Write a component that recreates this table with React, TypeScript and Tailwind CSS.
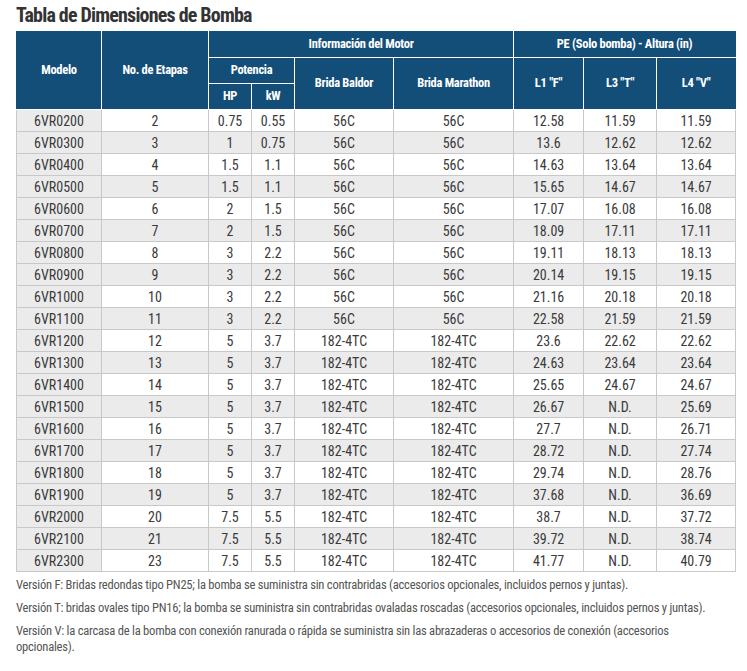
const rows: string[][] = [
  ['6VR0200', '2', '0.75', '0.55', '56C', '56C', '12.58', '11.59', '11.59'],
  ['6VR0300', '3', '1', '0.75', '56C', '56C', '13.6', '12.62', '12.62'],
  ['6VR0400', '4', '1.5', '1.1', '56C', '56C', '14.63', '13.64', '13.64'],
  ['6VR0500', '5', '1.5', '1.1', '56C', '56C', '15.65', '14.67', '14.67'],
  ['6VR0600', '6', '2', '1.5', '56C', '56C', '17.07', '16.08', '16.08'],
  ['6VR0700', '7', '2', '1.5', '56C', '56C', '18.09', '17.11', '17.11'],
  ['6VR0800', '8', '3', '2.2', '56C', '56C', '19.11', '18.13', '18.13'],
  ['6VR0900', '9', '3', '2.2', '56C', '56C', '20.14', '19.15', '19.15'],
  ['6VR1000', '10', '3', '2.2', '56C', '56C', '21.16', '20.18', '20.18'],
  ['6VR1100', '11', '3', '2.2', '56C', '56C', '22.58', '21.59', '21.59'],
  ['6VR1200', '12', '5', '3.7', '182-4TC', '182-4TC', '23.6', '22.62', '22.62'],
  ['6VR1300', '13', '5', '3.7', '182-4TC', '182-4TC', '24.63', '23.64', '23.64'],
  ['6VR1400', '14', '5', '3.7', '182-4TC', '182-4TC', '25.65', '24.67', '24.67'],
  ['6VR1500', '15', '5', '3.7', '182-4TC', '182-4TC', '26.67', 'N.D.', '25.69'],
  ['6VR1600', '16', '5', '3.7', '182-4TC', '182-4TC', '27.7', 'N.D.', '26.71'],
  ['6VR1700', '17', '5', '3.7', '182-4TC', '182-4TC', '28.72', 'N.D.', '27.74'],
  ['6VR1800', '18', '5', '3.7', '182-4TC', '182-4TC', '29.74', 'N.D.', '28.76'],
  ['6VR1900', '19', '5', '3.7', '182-4TC', '182-4TC', '37.68', 'N.D.', '36.69'],
  ['6VR2000', '20', '7.5', '5.5', '182-4TC', '182-4TC', '38.7', 'N.D.', '37.72'],
  ['6VR2100', '21', '7.5', '5.5', '182-4TC', '182-4TC', '39.72', 'N.D.', '38.74'],
  ['6VR2300', '23', '7.5', '5.5', '182-4TC', '182-4TC', '41.77', 'N.D.', '40.79'],
]

// column widths in px, left to right
const widths = [85, 107, 43, 43, 99, 120, 70, 73, 79]

const notes = [
  'Versión F: Bridas redondas tipo PN25; la bomba se suministra sin contrabridas (accesorios opcionales, incluidos pernos y juntas).',
  'Versión T: bridas ovales tipo PN16; la bomba se suministra sin contrabridas ovaladas roscadas (accesorios opcionales, incluidos pernos y juntas).',
  'Versión V: la carcasa de la bomba con conexión ranurada o rápida se suministra sin las abrazaderas o accesorios de conexión (accesorios opcionales).',
]

const th = 'border border-white font-bold text-white text-[12.5px] tracking-[-0.3px] text-center align-middle p-0'

export default function App() {
  return (
    <div className="bg-white w-[747px] h-[671px] px-4 pt-[2px] text-[#333] font-['Roboto_Condensed','Liberation_Sans',sans-serif]">
      <h1 className="text-[20px] leading-[26px] font-bold text-[#333] tracking-[-0.8px]">
        Tabla de Dimensiones de Bomba
      </h1>

      <table className="border-collapse table-fixed w-[719px] mt-[3px]">
        <colgroup>
          {widths.map((w, i) => (
            <col key={i} style={{ width: w }} />
          ))}
        </colgroup>
        <thead className="bg-[#134e79]">
          <tr className="h-[26px]">
            <th rowSpan={3} className={th + ' border-l-[#134e79] border-t-[#134e79]'}>Modelo</th>
            <th rowSpan={3} className={th + ' border-t-[#134e79]'}>No. de Etapas</th>
            <th colSpan={4} className={th + ' border-t-[#134e79]'}>Información del Motor</th>
            <th colSpan={3} className={th + ' border-t-[#134e79] border-r-[#134e79]'}>PE (Solo bomba) - Altura (in)</th>
          </tr>
          <tr className="h-[26px]">
            <th colSpan={2} className={th}>Potencia</th>
            <th rowSpan={2} className={th}>Brida Baldor</th>
            <th rowSpan={2} className={th}>Brida Marathon</th>
            <th rowSpan={2} className={th}>L1 "F"</th>
            <th rowSpan={2} className={th}>L3 "T"</th>
            <th rowSpan={2} className={th + ' border-r-[#134e79]'}>L4 "V"</th>
          </tr>
          <tr className="h-[26px]">
            <th className={th}>HP</th>
            <th className={th}>kW</th>
          </tr>
        </thead>
        <tbody>
          {rows.map((r, i) => (
            <tr key={r[0]} className={'h-[22px] ' + (i % 2 === 1 ? 'bg-[#ebebeb]' : 'bg-white')}>
              {r.map((c, j) => (
                <td
                  key={j}
                  className={
                    'border border-[#c8c8c8] text-center text-[14px] leading-[20px] p-0 text-[#3a3a3a] ' +
                    (j === 0 ? 'bg-[#ebebeb]' : '')
                  }
                >
                  {c}
                </td>
              ))}
            </tr>
          ))}
        </tbody>
      </table>

      <div className="mt-[5px] max-w-[705px] flex flex-col gap-[7px] text-[12.6px] leading-[16px] tracking-[-0.25px] text-[#555]">
        {notes.map((n) => (
          <p key={n}>{n}</p>
        ))}
      </div>
    </div>
  )
}
